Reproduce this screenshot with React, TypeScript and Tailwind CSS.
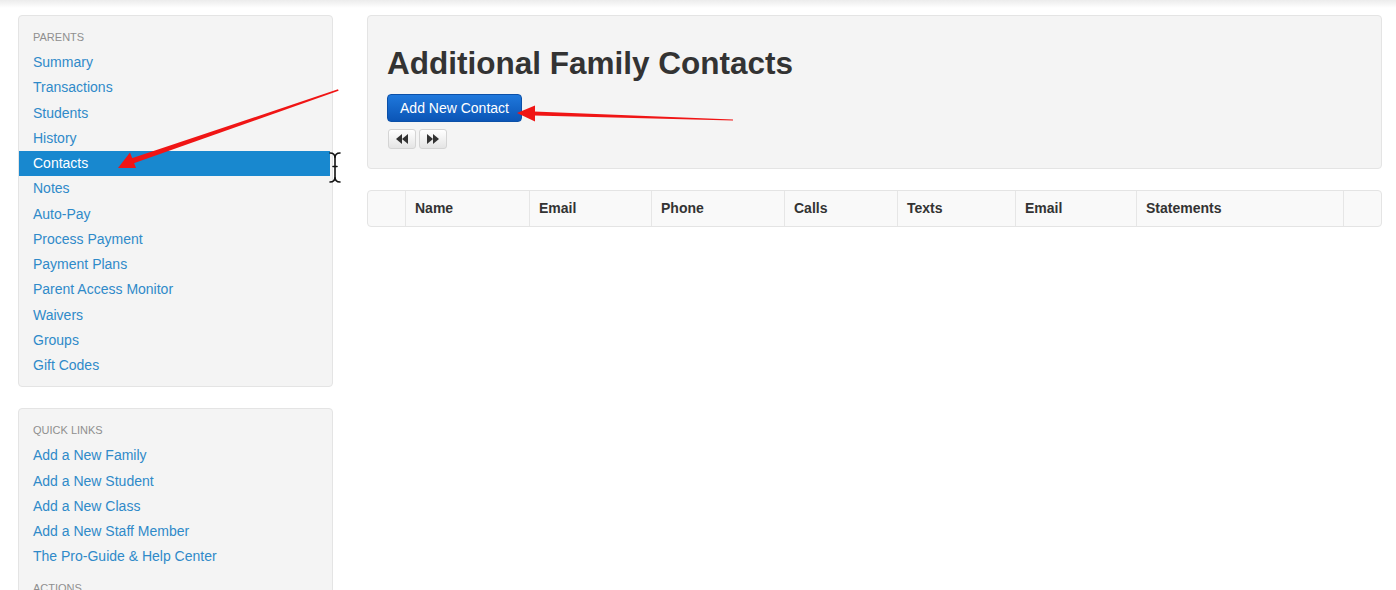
import React from "react";

const parentLinks = [
  "Summary",
  "Transactions",
  "Students",
  "History",
  "Contacts",
  "Notes",
  "Auto-Pay",
  "Process Payment",
  "Payment Plans",
  "Parent Access Monitor",
  "Waivers",
  "Groups",
  "Gift Codes",
];

const quickLinks = [
  "Add a New Family",
  "Add a New Student",
  "Add a New Class",
  "Add a New Staff Member",
  "The Pro-Guide & Help Center",
];

const columns: { label: string; w: string }[] = [
  { label: "", w: "w-[38px]" },
  { label: "Name", w: "w-[124px]" },
  { label: "Email", w: "w-[122px]" },
  { label: "Phone", w: "w-[133px]" },
  { label: "Calls", w: "w-[113px]" },
  { label: "Texts", w: "w-[118px]" },
  { label: "Email", w: "w-[121px]" },
  { label: "Statements", w: "w-[207px]" },
  { label: "", w: "flex-1" },
];

function RewindIcon() {
  return (
    <svg width="12" height="10" viewBox="0 0 12 10">
      <path d="M6 0 L0 5 L6 10 Z" fill="#333" />
      <path d="M12 0 L6 5 L12 10 Z" fill="#333" />
    </svg>
  );
}

function ForwardIcon() {
  return (
    <svg width="12" height="10" viewBox="0 0 12 10">
      <path d="M0 0 L6 5 L0 10 Z" fill="#333" />
      <path d="M6 0 L12 5 L6 10 Z" fill="#333" />
    </svg>
  );
}

export default function App() {
  return (
    <div
      className="relative w-[1396px] h-[590px] overflow-hidden bg-white text-[14px] text-[#333]"
      style={{ fontFamily: '"Liberation Sans", Arial, sans-serif' }}
    >
      <div className="absolute top-0 left-0 right-0 h-[8px] bg-gradient-to-b from-[#ececec] to-white" />

      <div className="flex pt-[15px] pl-[18px] gap-[34px]">
        {/* Sidebar */}
        <div className="w-[315px] flex flex-col gap-[21px]">
          <div className="bg-[#f4f4f4] border border-[#e4e4e4] rounded-[4px] pt-[13px] pb-[8px]">
            <div className="pl-[14px] text-[11px] leading-[16px] text-[#8f8f8f] uppercase mb-[5px]">
              Parents
            </div>
            {parentLinks.map((l) =>
              l === "Contacts" ? (
                <div
                  key={l}
                  className="pl-[14px] mr-[2px] leading-[25.25px] bg-[#1888cf] text-white"
                >
                  {l}
                </div>
              ) : (
                <div key={l} className="pl-[14px] leading-[25.25px] text-[#2f8ac9]">
                  {l}
                </div>
              )
            )}
          </div>

          <div className="bg-[#f4f4f4] border border-[#e4e4e4] rounded-[4px] pt-[13px] pb-[9px]">
            <div className="pl-[14px] text-[11px] leading-[16px] text-[#8f8f8f] uppercase mb-[5px]">
              Quick Links
            </div>
            {quickLinks.map((l) => (
              <div key={l} className="pl-[14px] leading-[25.25px] text-[#2f8ac9]">
                {l}
              </div>
            ))}
            <div className="pl-[14px] mt-[10px] text-[11px] leading-[16px] text-[#8f8f8f] uppercase">
              Actions
            </div>
          </div>
        </div>

        {/* Main */}
        <div className="w-[1015px] flex flex-col gap-[21px]">
          <div className="bg-[#f4f4f4] border border-[#e4e4e4] rounded-[4px] pt-[27px] pb-[19px] pl-[19px]">
            <h1 className="text-[31.5px] leading-[40px] font-bold text-[#333] mb-[11px]">
              Additional Family Contacts
            </h1>
            <button className="block h-[28px] w-[135px] rounded-[4px] border border-[#0b50a8] bg-gradient-to-b from-[#1f78dc] to-[#0b55b6] text-white text-[14px] leading-[26px]">
              Add New Contact
            </button>
            <div className="flex gap-[3px] mt-[7px] pl-[1px]">
              <div className="w-[28px] h-[20px] rounded-[3px] border border-[#d4d4d4] bg-gradient-to-b from-white to-[#e4e4e4] flex items-center justify-center">
                <RewindIcon />
              </div>
              <div className="w-[28px] h-[20px] rounded-[3px] border border-[#d4d4d4] bg-gradient-to-b from-white to-[#e4e4e4] flex items-center justify-center">
                <ForwardIcon />
              </div>
            </div>
          </div>

          <div className="flex h-[37px] bg-[#f9f9f9] border border-[#e4e4e4] rounded-[4px]">
            {columns.map((c, i) => (
              <div
                key={i}
                className={`${c.w} shrink-0 flex items-center pl-[9px] font-bold text-[14px] text-[#333] ${
                  i < columns.length - 1 ? "border-r border-[#e6e6e6]" : ""
                }`}
              >
                {c.label}
              </div>
            ))}
          </div>
        </div>
      </div>

      {/* Annotation overlay */}
      <svg
        className="absolute top-0 left-0 pointer-events-none"
        width="1396"
        height="590"
        viewBox="0 0 1396 590"
      >
        <polygon points="338,89.3 338.6,90.7 133,163.5 131,158.5" fill="#f01515" />
        <polygon points="118,168 130,152.5 136,168" fill="#f01515" />
        <polygon points="733,119.5 733,120.5 534,115.5 534,111.5" fill="#f01515" />
        <polygon points="517,113 535,105.5 535,121.5" fill="#f01515" />
        {/* I-beam cursor */}
        <g fill="none" stroke="#111" strokeWidth="1.6" strokeLinecap="round">
          <path d="M330 153 Q335 153 335 158 Q335 153 340 153" />
          <path d="M335 158 L335 177" />
          <path d="M330 182 Q335 182 335 177 Q335 182 340 182" />
          <path d="M333 166.5 L337 166.5" />
        </g>
      </svg>
    </div>
  );
}
